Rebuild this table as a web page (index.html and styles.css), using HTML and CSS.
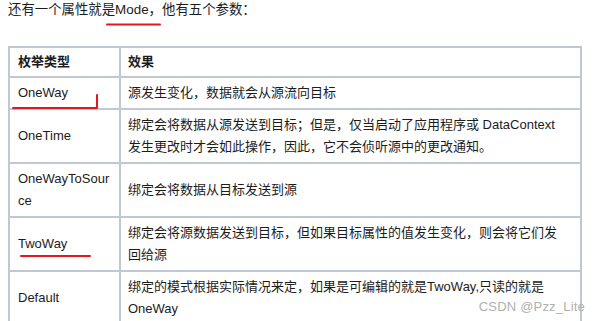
FILE: index.html
```html
<!DOCTYPE html>
<html lang="zh">
<head>
<meta charset="utf-8">
<link rel="stylesheet" href="styles.css">
</head>
<body>
<div class="page">
  <p class="intro">还有一个属性就是Mode，他有五个参数：</p>
  <table class="modes">
    <colgroup><col class="c1"><col class="c2"></colgroup>
    <thead>
      <tr class="head"><th>枚举类型</th><th>效果</th></tr>
    </thead>
    <tbody>
      <tr class="r1"><td>OneWay</td><td>源发生变化，数据就会从源流向目标</td></tr>
      <tr class="r2"><td>OneTime</td><td>绑定会将数据从源发送到目标；但是，仅当启动了应用程序或 DataContext 发生更改时才会如此操作，因此，它不会侦听源中的更改通知。</td></tr>
      <tr class="r2"><td class="brk">OneWayToSource</td><td>绑定会将数据从目标发送到源</td></tr>
      <tr class="r3"><td>TwoWay</td><td>绑定会将源数据发送到目标，但如果目标属性的值发生变化，则会将它们发回给源</td></tr>
      <tr class="r3"><td>Default</td><td>绑定的模式根据实际情况来定，如果是可编辑的就是TwoWay,只读的就是OneWay</td></tr>
    </tbody>
  </table>
  <svg class="marks" width="600" height="321" viewBox="0 0 600 321">
    <path d="M107 24.5 H160" />
    <path d="M13 108 H97 V95" />
    <path d="M21 256 H90" />
  </svg>
  <div class="wm">CSDN @Pzz_Lite</div>
</div>
</body>
</html>
```

FILE: styles.css
```css
html, body {
  margin: 0;
  padding: 0;
  background: #ffffff;
}
.page {
  position: relative;
  width: 600px;
  height: 321px;
  overflow: hidden;
  font-family: "Liberation Sans", "Noto Sans CJK SC", sans-serif;
  color: #1c1c1c;
  font-size: 13px;
}
.intro {
  margin: 0;
  padding: 0 0 0 8px;
  line-height: 20px;
  font-size: 13.4px;
}
.modes {
  margin: 26px 0 0 8px;
  border-collapse: collapse;
  width: 574px;
  table-layout: fixed;
  border: 2px solid #bcc3cf;
}
.c1 { width: 111px; }
.modes th, .modes td {
  border: 2px solid #c2c8d3;
  text-align: left;
  vertical-align: middle;
  padding: 4px 16px 4px 8px;
  line-height: 22px;
}
.modes td + td, .modes th + th {
  padding-left: 7px;
}
.modes td.brk {
  padding-right: 8px;
}
.modes th {
  font-weight: bold;
  padding-top: 3px;
  padding-bottom: 3px;
}
.r1 td { height: 22px; }
.r2 td { height: 43px; }
.r3 td { height: 42px; }
.brk { word-break: break-all; }
.marks {
  position: absolute;
  left: 0;
  top: 0;
  pointer-events: none;
}
.marks path {
  fill: none;
  stroke: #e5161e;
  stroke-width: 2;
  stroke-linecap: round;
  stroke-linejoin: round;
}
.wm {
  position: absolute;
  right: 15px;
  top: 299px;
  font-size: 13px;
  color: #b0b0b0;
  letter-spacing: 0.2px;
}
```
